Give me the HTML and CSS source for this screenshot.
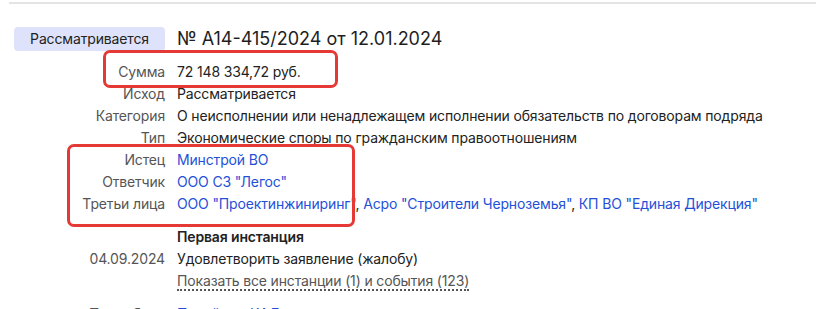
FILE: index.html
```html
<!DOCTYPE html>
<html lang="ru">
<head>
<meta charset="utf-8">
<link rel="stylesheet" href="styles.css">
</head>
<body>
<div class="page">
  <div class="card">
    <div class="header">
      <span class="badge">Рассматривается</span>
      <h1 class="title">№ А14-415/2024 от 12.01.2024</h1>
    </div>
    <dl class="props">
      <dt>Сумма</dt><dd>72 148 334,72 руб.</dd>
      <dt>Исход</dt><dd>Рассматривается</dd>
      <dt>Категория</dt><dd>О неисполнении или ненадлежащем исполнении обязательств по договорам подряда</dd>
      <dt>Тип</dt><dd>Экономические споры по гражданским правоотношениям</dd>
      <dt>Истец</dt><dd><a class="link">Минстрой ВО</a></dd>
      <dt>Ответчик</dt><dd><a class="link">ООО СЗ "Легос"</a></dd>
      <dt>Третьи лица</dt><dd><a class="link">ООО "Проектинжиниринг"</a><span class="sep">,</span> <a class="link">Асро "Строители Черноземья"</a><span class="sep">,</span> <a class="link">КП ВО "Единая Дирекция"</a></dd>
      <dt class="spaced"></dt><dd class="spaced strong">Первая инстанция</dd>
      <dt>04.09.2024</dt><dd>Удовлетворить заявление (жалобу)</dd>
      <dt></dt><dd><span class="dotted">Показать все инстанции (1) и события (123)</span></dd>
      <dt class="last">Подробнее</dt><dd class="last"><a class="link">Перейти в КАД</a> <svg class="ext" width="11" height="11" viewBox="0 0 11 11"><rect x="0.5" y="0.5" width="10" height="10" fill="#2450d8"/><path d="M3.5 7.5 L7.5 3.5 M4.5 3.5 H7.5 V6.5" stroke="#fff" stroke-width="1.3" fill="none"/></svg></dd>
    </dl>
    <div class="mark mark-sum"></div>
    <div class="mark mark-parties"></div>
  </div>
</div>
</body>
</html>
```

FILE: styles.css
```css
* { box-sizing: border-box; }
html, body { margin: 0; padding: 0; background: #fff; }
body {
  font-family: Inter, "Noto Sans", "Liberation Sans", sans-serif;
  font-size: 14px;
  letter-spacing: -0.15px;
  color: #222;
  overflow: hidden;
  height: 309px;
}
.page {
  padding-top: 2px;
  padding-left: 9px;
}
.card {
  position: relative;
  border-top: 2px solid #e4e4e4;
  padding-left: 5px;
  padding-top: 23px;
}
.header {
  display: flex;
  align-items: center;
  gap: 12px;
  height: 24px;
}
.badge {
  width: 151px;
  height: 24px;
  line-height: 24px;
  text-align: center;
  background: #dfe2fb;
  border-radius: 4px;
  color: #222;
  font-size: 14px;
}
.title {
  margin: 0;
  font-size: 18px;
  font-weight: 400;
  color: #1e1e1e;
  line-height: 24px;
  letter-spacing: 0;
}
.props {
  display: grid;
  grid-template-columns: 151px 1fr;
  column-gap: 12px;
  margin: 10px 0 0;
  line-height: 22px;
}
.props dt {
  text-align: right;
  color: #555;
}
.props dd {
  margin: 0;
  white-space: nowrap;
}
.props .spaced { margin-top: 11px; }
.props .last { margin-top: 11px; }
.strong { font-weight: 600; }
.link { color: #2450d8; text-decoration: none; }
.sep { color: #222; }
.dotted {
  color: #555;
  border-bottom: 2px dotted #555;
}
.ext { vertical-align: -1px; margin-left: 2px; }
.mark {
  position: absolute;
  border: 3.5px solid #e53935;
  border-radius: 7px;
}
.mark-sum {
  left: 94px;
  top: 46px;
  width: 235px;
  height: 38px;
}
.mark-parties {
  left: 58px;
  top: 140px;
  width: 288px;
  height: 83px;
}
```
